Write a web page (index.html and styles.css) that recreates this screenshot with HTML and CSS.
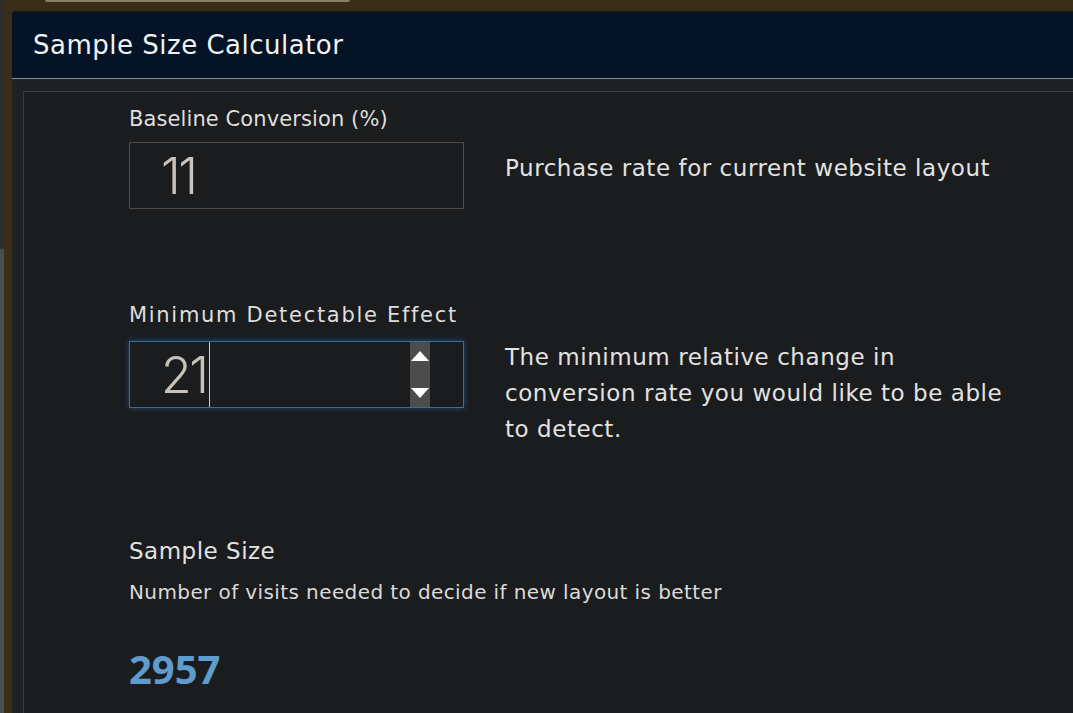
FILE: index.html
```html
<!DOCTYPE html>
<html lang="en">
<head>
<meta charset="utf-8">
<title>Sample Size Calculator</title>
<link rel="stylesheet" href="styles.css">
</head>
<body>
<div class="side-strip"></div>
<div class="top-tab"></div>
<div class="window">
  <div class="panel">
    <div class="panel-header">Sample Size Calculator</div>
    <div class="panel-body">
      <div class="card">
        <div class="group">
          <div class="label">Baseline Conversion (%)</div>
          <div class="row">
            <div class="field">
              <span class="value">11</span>
            </div>
            <p class="desc desc-first">Purchase rate for current website layout</p>
          </div>
        </div>
        <div class="group group-second">
          <div class="label label-wide">Minimum Detectable Effect</div>
          <div class="row">
            <div class="field field-focus">
              <span class="value">21</span><span class="caret"></span>
              <div class="spinner">
                <span class="tri tri-up"></span>
                <span class="tri tri-down"></span>
              </div>
            </div>
            <p class="desc desc-second">The minimum relative change in conversion rate you would like to be able to detect.</p>
          </div>
        </div>
        <div class="result">
          <div class="result-title">Sample Size</div>
          <div class="result-sub">Number of visits needed to decide if new layout is better</div>
          <div class="result-value">2957</div>
        </div>
      </div>
    </div>
  </div>
</div>
</body>
</html>
```

FILE: styles.css
```css
* { box-sizing: border-box; }
html, body { height: 100%; }
body {
  margin: 0;
  background: #3a2e19;
  font-family: "DejaVu Sans", "Open Sans", sans-serif;
  overflow: hidden;
  position: relative;
}
.side-strip {
  position: absolute;
  left: 0; top: 0; bottom: 0;
  width: 4px;
  background: linear-gradient(#2b2b29 0, #2b2b29 248px, #465052 250px, #465052 100%);
}
.top-tab {
  position: absolute;
  left: 45px; top: 0;
  width: 305px; height: 2px;
  background: #8a7e69;
  border-radius: 0 0 3px 3px;
}
.window {
  padding: 11px 0 0 12px;
  height: 100%;
}
.panel {
  height: 100%;
  background: #1f2223;
  border-top-left-radius: 4px;
  overflow: hidden;
  display: flex;
  flex-direction: column;
}
.panel-header {
  flex: none;
  height: 68px;
  background: #041426;
  border-top: 2px solid #0e161d;
  border-bottom: 1px solid #8c8e90;
  color: #f2f2f2;
  font-size: 26px;
  padding: 16px 0 0 21px;
  line-height: 32px;
  letter-spacing: 0.5px;
}
.panel-body {
  flex: 1;
  min-height: 0;
  padding: 12px 0 0 11px;
}
.card {
  min-height: 100%;
  background: #1b1c1e;
  border-top: 1px solid #3a3c3e;
  border-left: 1px solid #3a3c3e;
  padding: 13px 0 0 105px;
}
.label {
  color: #dedede;
  font-size: 21px;
  line-height: 28px;
  letter-spacing: 0.1px;
  margin-bottom: 9px;
}
.label-wide { letter-spacing: 1.7px; }
.group-second { margin-top: 92px; }
.group-second .label { margin-bottom: 12px; }
.row {
  display: flex;
  align-items: flex-start;
  gap: 41px;
}
.field {
  position: relative;
  flex: none;
  width: 335px;
  height: 67px;
  border: 1px solid #4b4b4b;
  background: #1b1c1e;
  padding-left: 31px;
  display: flex;
  align-items: center;
}
.field-focus {
  border-color: #2f70a8;
  box-shadow: 0 0 6px rgba(40, 112, 175, 0.6);
}
.value {
  color: #c8c2ba;
  font-family: Inter, "Open Sans", sans-serif;
  font-size: 50px;
  font-weight: 300;
  line-height: 1;
  letter-spacing: -2.5px;
}
.caret {
  align-self: stretch;
  width: 1px;
  margin-left: 3px;
  background: #cfcfcf;
}
.spinner {
  position: absolute;
  top: 0; bottom: 0;
  left: 280px;
  width: 20px;
  background: #4c4c4c;
}
.tri {
  position: absolute;
  left: 1px;
  width: 0; height: 0;
  border-left: 9px solid transparent;
  border-right: 9px solid transparent;
}
.tri-up { top: 9px; border-bottom: 10px solid #ffffff; }
.tri-down { bottom: 9px; border-top: 10px solid #ffffff; }
.desc {
  margin: 0;
  color: #e2e2e2;
  font-size: 23px;
  line-height: 36px;
  letter-spacing: 0.55px;
  max-width: 505px;
}
.desc-first { margin-top: 8px; }
.desc-second { margin-top: -2px; }
.result { margin-top: 89px; }
.result-title {
  color: #e2e2e2;
  font-size: 23px;
  line-height: 30px;
  letter-spacing: 0.5px;
}
.result-sub {
  color: #dadada;
  font-size: 20px;
  line-height: 26px;
  letter-spacing: 0.4px;
  margin-top: 13px;
}
.result-value {
  color: #5e9cd0;
  font-family: "Open Sans", sans-serif;
  font-size: 40px;
  font-weight: 700;
  line-height: 44px;
  margin-top: 42px;
}
```
